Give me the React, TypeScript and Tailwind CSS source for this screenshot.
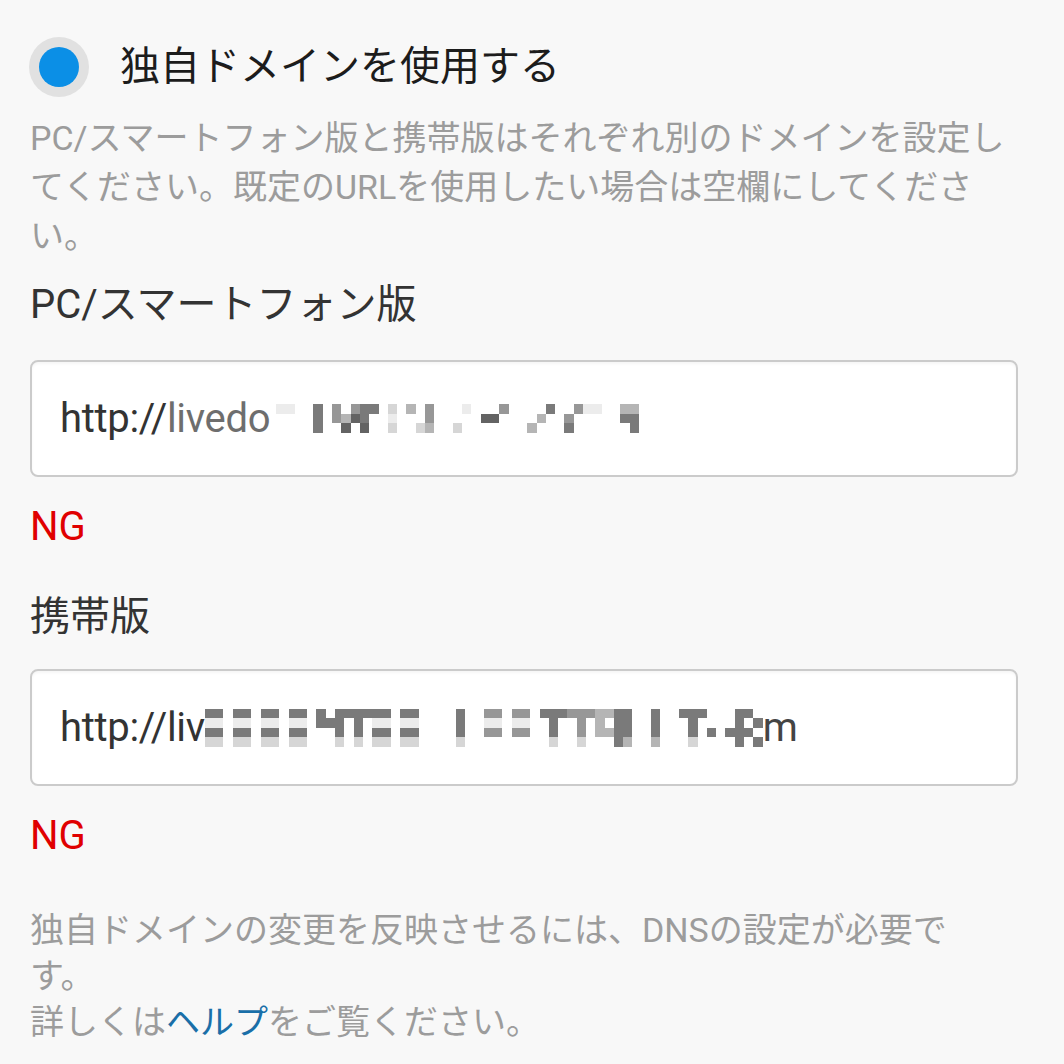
import React from 'react';

const font = "font-['Roboto','Noto_Sans_CJK_JP',sans-serif]";

const shade: Record<string, string> = {
  '0': 'bg-transparent',
  '1': 'bg-[#ececec]',
  '2': 'bg-[#d6d6d6]',
  '3': 'bg-[#b5b5b5]',
  '4': 'bg-[#979797]',
  '5': 'bg-[#7a7a7a]',
  '6': 'bg-[#636363]',
};

// pixelated (censored) part of the URLs
const mosaicPc = [
  '1100504045502030400010004000050041100330',
  '0000504365001000400000660000300400000550',
  '0000500606002002300200000003000500000050',
];

const mosaicMobile = [
  '550550550550505555550550000500440440555444335500500555000550',
  '110110110110555050110110000500110110050040305500500050000505',
  '550550550550005050550550000500440440050040335500500050505550',
  '220220220220002020220220000200000000020020005300300020000505',
];

function Mosaic({ rows }: { rows: string[] }) {
  return (
    <div className="flex flex-col">
      {rows.map((row, i) => (
        <div key={i} className="flex">
          {row.split('').map((c, j) => (
            <span key={j} className={`w-[9.3px] h-[9.5px] ${shade[c]}`} />
          ))}
        </div>
      ))}
    </div>
  );
}

function UrlInput({ children }: { children: React.ReactNode }) {
  return (
    <div className="h-[117px] rounded-[8px] border-2 border-[#cbcbcb] bg-white pl-[28px] flex items-center shadow-[inset_0_2px_3px_rgba(0,0,0,0.04)]">
      <div className="flex items-center text-[40px] leading-[56px] text-[#333] tracking-[-0.3px]">
        {children}
      </div>
    </div>
  );
}

export default function App() {
  return (
    <div className={`min-h-[1064px] bg-[#f8f8f8] pl-[30px] pr-[46px] ${font}`}>
      <div className="pt-[37px] flex items-center h-[97px] -ml-px">
        <div className="w-[60px] h-[60px] rounded-full bg-[#e1e1e1] flex items-center justify-center">
          <div className="w-[40px] h-[40px] rounded-full bg-[#0b8fe6]" />
        </div>
        <span className="ml-[31px] text-[40px] leading-[60px] text-[#1c1c1c]">
          独自ドメインを使用する
        </span>
      </div>

      <p className="mt-[17px] text-[34px] leading-[49px] text-[#9c9c9c]">
        PC/スマートフォン版と携帯版はそれぞれ別のドメインを設定してください。既定のURLを使用したい場合は空欄にしてください。
      </p>

      <div className="mt-[16px] text-[40px] leading-[56px] text-[#333]">PC/スマートフォン版</div>
      <div className="mt-[27px]">
        <UrlInput>
          <span>http://</span>
          <span className="text-[#6e6e6e]">livedo</span>
          <span className="ml-[6px]">
            <Mosaic rows={mosaicPc} />
          </span>
        </UrlInput>
      </div>
      <div className="mt-[22px] text-[40px] leading-[56px] text-[#e00000]">NG</div>

      <div className="mt-[34px] text-[40px] leading-[56px] text-[#333]">携帯版</div>
      <div className="mt-[24px]">
        <UrlInput>
          <span>http://liv</span>
          <Mosaic rows={mosaicMobile} />
          <span className="text-[#444]">m</span>
        </UrlInput>
      </div>
      <div className="mt-[22px] text-[40px] leading-[56px] text-[#e00000]">NG</div>

      <div className="mt-[43px] w-[960px] text-[34px] leading-[46px] text-[#9c9c9c]">
        <p>独自ドメインの変更を反映させるには、DNSの設定が必要です。</p>
        <p>
          詳しくは<a className="text-[#1a6fa8]">ヘルプ</a>をご覧ください。
        </p>
      </div>
    </div>
  );
}
